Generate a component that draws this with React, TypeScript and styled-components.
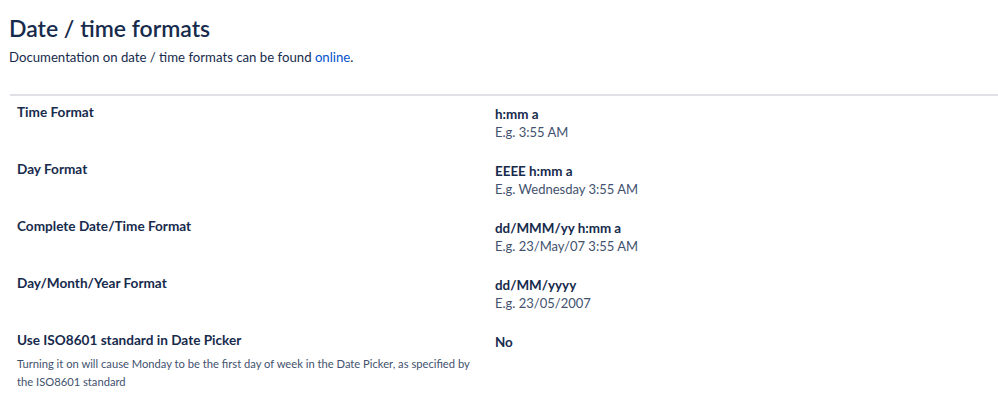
import styled, { createGlobalStyle } from 'styled-components';

const GlobalStyle = createGlobalStyle`
  * { box-sizing: border-box; }
  body {
    margin: 0;
    background: #ffffff;
    font-family: 'Lato', 'Noto Sans', 'Liberation Sans', sans-serif;
    color: #172b4d;
  }
`;

const Page = styled.div`
  padding: 12px 0 0 9px;
`;

const Title = styled.h1`
  margin: 0;
  font-size: 23px;
  line-height: 32px;
  font-weight: 600;
  color: #172b4d;
`;

const Intro = styled.p`
  margin: 3px 0 0;
  font-size: 13.2px;
  line-height: 20px;
  color: #172b4d;
  a {
    color: #0052cc;
    text-decoration: none;
  }
`;

const Table = styled.div`
  margin-top: 27px;
  margin-left: 1px;
  border-top: 2px solid #dfe1e6;
  display: grid;
  grid-template-columns: 478px 1fr;
`;

const LabelCell = styled.div`
  padding: 7px 7px 0;
`;

const Label = styled.div`
  font-size: 13.6px;
  line-height: 18px;
  font-weight: 700;
  color: #172b4d;
`;

const Help = styled.div`
  margin-top: 6px;
  font-size: 11.2px;
  line-height: 18px;
  color: #42526e;
`;

const ValueCell = styled.div`
  padding: 9px 7px 12px;
  font-size: 13px;
  line-height: 18px;
`;

const Pattern = styled.div`
  font-weight: 700;
  font-size: 13.4px;
  color: #172b4d;
`;

const Example = styled.div`
  color: #42526e;
`;

const rows = [
  { label: 'Time Format', pattern: 'h:mm a', example: 'E.g. 3:55 AM' },
  { label: 'Day Format', pattern: 'EEEE h:mm a', example: 'E.g. Wednesday 3:55 AM' },
  { label: 'Complete Date/Time Format', pattern: 'dd/MMM/yy h:mm a', example: 'E.g. 23/May/07 3:55 AM' },
  { label: 'Day/Month/Year Format', pattern: 'dd/MM/yyyy', example: 'E.g. 23/05/2007' },
];

export default function App() {
  return (
    <>
      <GlobalStyle />
      <Page>
        <Title>Date / time formats</Title>
        <Intro>
          Documentation on date / time formats can be found <a href="#">online</a>.
        </Intro>
        <Table>
          {rows.map((r) => (
            <>
              <LabelCell key={r.label + '-l'}>
                <Label>{r.label}</Label>
              </LabelCell>
              <ValueCell key={r.label + '-v'}>
                <Pattern>{r.pattern}</Pattern>
                <Example>{r.example}</Example>
              </ValueCell>
            </>
          ))}
          <LabelCell>
            <Label>Use ISO8601 standard in Date Picker</Label>
            <Help>
              Turning it on will cause Monday to be the first day of week in the Date Picker, as specified by
              the ISO8601 standard
            </Help>
          </LabelCell>
          <ValueCell>
            <Pattern>No</Pattern>
          </ValueCell>
        </Table>
      </Page>
    </>
  );
}
